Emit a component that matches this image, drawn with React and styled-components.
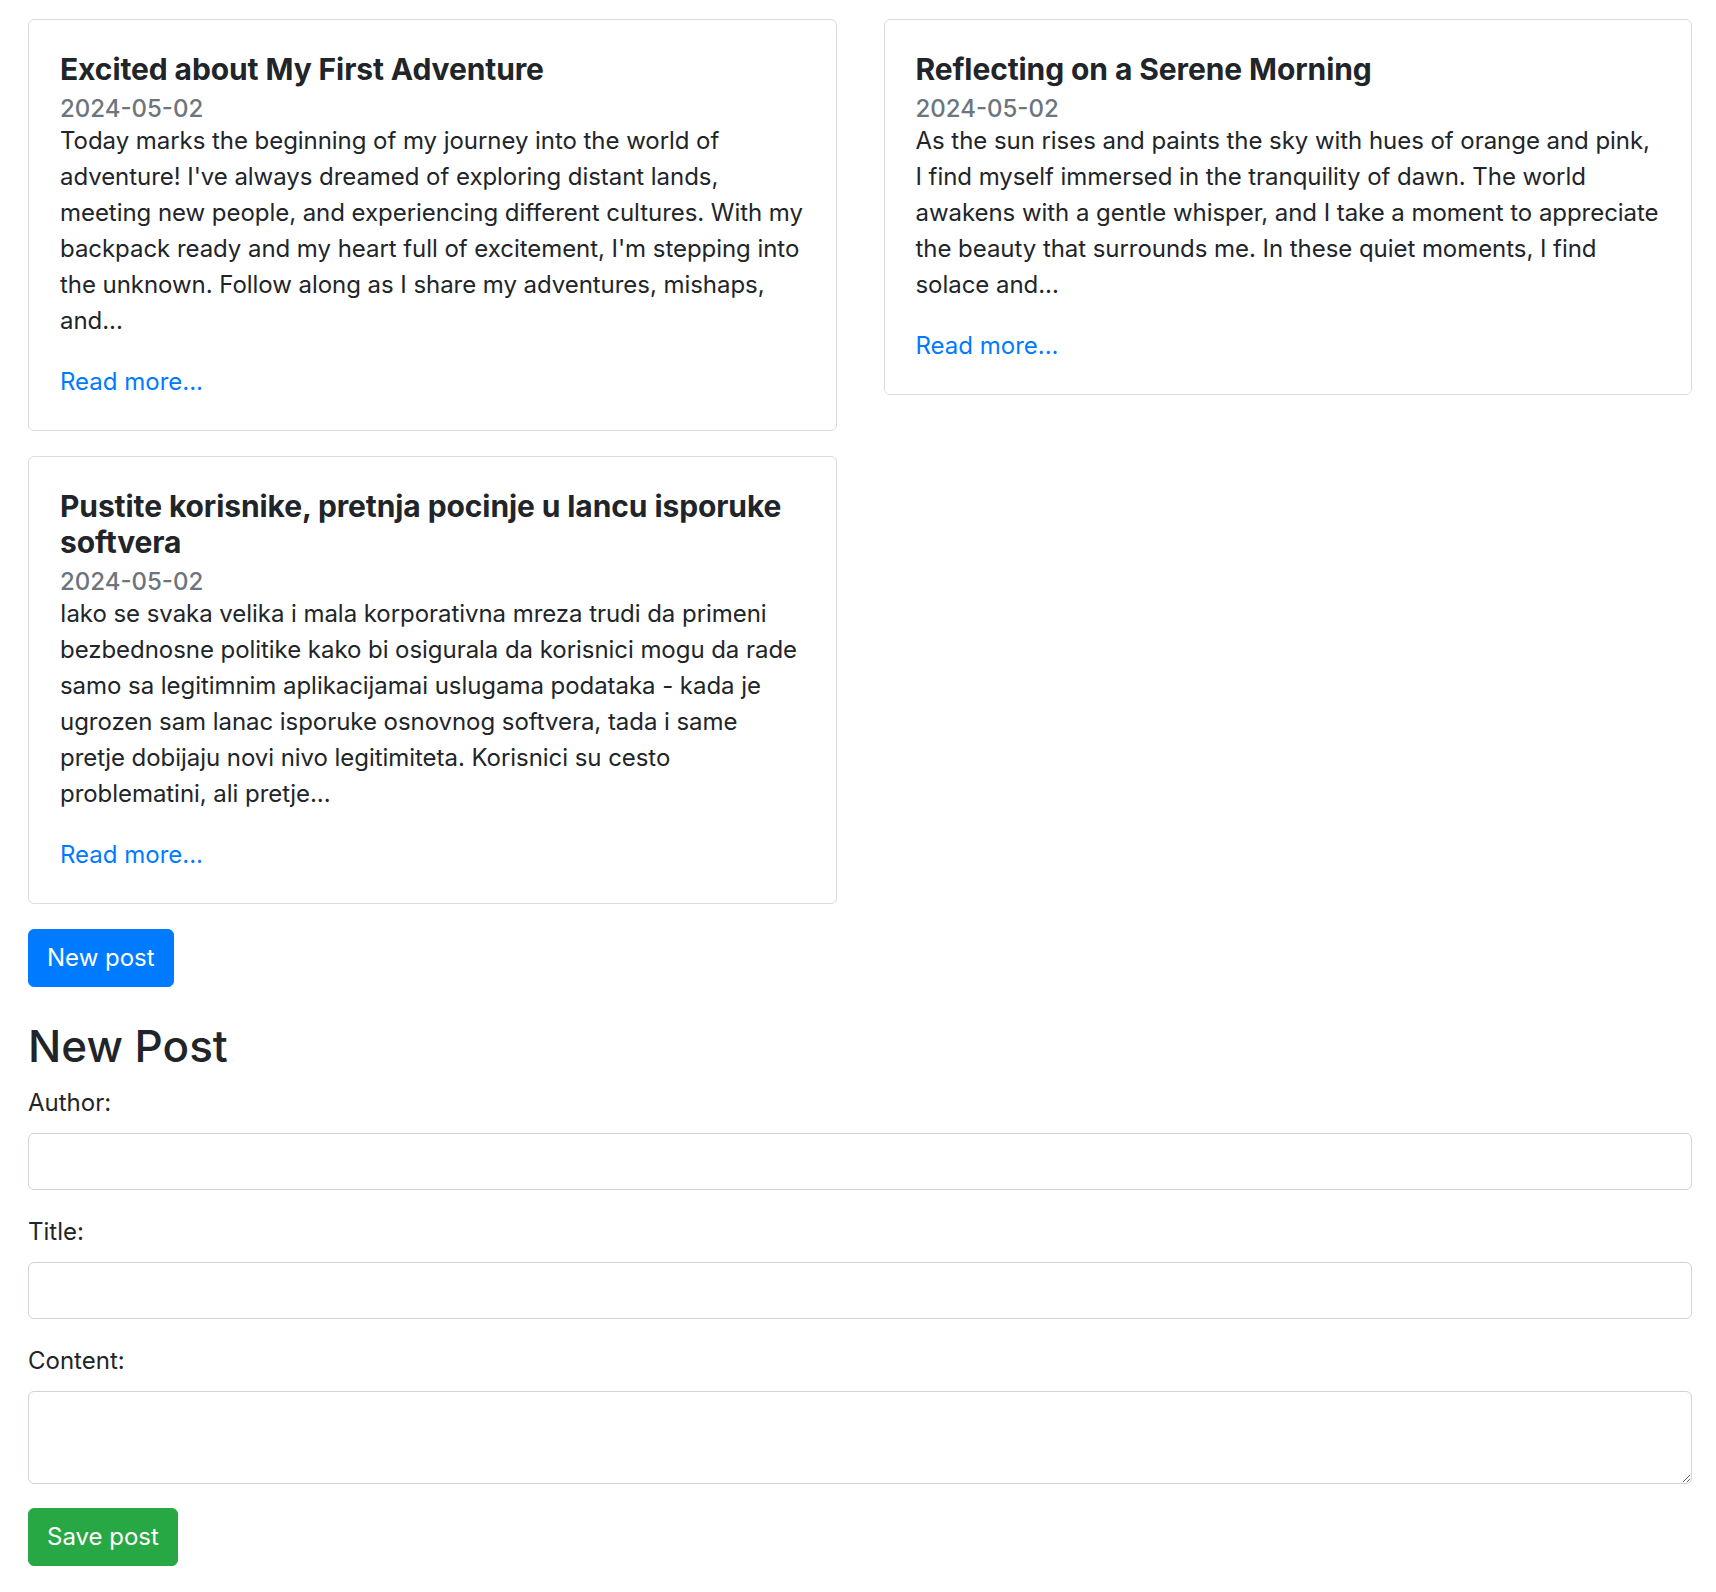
import React, { useState } from "react";
import styled, { createGlobalStyle } from "styled-components";

const GlobalStyle = createGlobalStyle`
  body {
    margin: 0;
    background: #fff;
    color: #212529;
    font-family: Inter, "Noto Sans", sans-serif;
  }
  * {
    box-sizing: border-box;
  }
`;

const Page = styled.div`
  padding: 19px 24px 20px 28px;
`;

const PostGrid = styled.div`
  display: grid;
  grid-template-columns: 1fr 1fr;
  column-gap: 47px;
  row-gap: 25px;
  align-items: start;
`;

const Card = styled.div`
  border: 1px solid #dcdcdc;
  border-radius: 6px;
  padding: 31px 31px 30px;
`;

const CardTitle = styled.h5`
  margin: 0 0 8px;
  font-size: 30px;
  font-weight: 700;
  line-height: 1.2;
  letter-spacing: -0.1px;
`;

const CardDate = styled.h6`
  margin: 0 0 -1px;
  font-size: 24px;
  font-weight: 500;
  line-height: 1.2;
  color: #6c757d;
`;

const CardText = styled.p`
  margin: 0 0 25px;
  font-size: 24px;
  line-height: 1.5;
  letter-spacing: -0.05px;
`;

const ReadMore = styled.a`
  font-size: 24px;
  line-height: 1.5;
  color: #007bff;
  text-decoration: none;
`;

const Button = styled.button`
  display: inline-block;
  padding: 10px 18px;
  border: 1px solid ${(p) => p.$color};
  border-radius: 6px;
  background: ${(p) => p.$color};
  color: #fff;
  font-family: inherit;
  font-size: 24px;
  line-height: 1.5;
  cursor: pointer;
`;

const NewPostBar = styled.div`
  margin-top: 25px;
`;

const FormHeading = styled.h2`
  margin: 33px 0 13px;
  font-size: 44px;
  font-weight: 500;
  line-height: 1.2;
`;

const FormGroup = styled.div`
  margin-bottom: 24px;
`;

const Label = styled.label`
  display: block;
  margin-bottom: 12px;
  font-size: 24px;
  line-height: 1.5;
`;

const Input = styled.input`
  display: block;
  width: 100%;
  height: 57px;
  padding: 9px 18px;
  border: 1px solid #ced4da;
  border-radius: 6px;
  font-family: inherit;
  font-size: 24px;
  color: #495057;
`;

const TextArea = styled.textarea`
  display: block;
  width: 100%;
  height: 93px;
  padding: 9px 18px;
  border: 1px solid #ced4da;
  border-radius: 6px;
  font-family: inherit;
  font-size: 24px;
  color: #495057;
  resize: vertical;
`;

const posts = [
  {
    id: 1,
    title: "Excited about My First Adventure",
    date: "2024-05-02",
    excerpt:
      "Today marks the beginning of my journey into the world of adventure! I've always dreamed of exploring distant lands, meeting new people, and experiencing different cultures. With my backpack ready and my heart full of excitement, I'm stepping into the unknown. Follow along as I share my adventures, mishaps, and...",
  },
  {
    id: 2,
    title: "Reflecting on a Serene Morning",
    date: "2024-05-02",
    excerpt:
      "As the sun rises and paints the sky with hues of orange and pink, I find myself immersed in the tranquility of dawn. The world awakens with a gentle whisper, and I take a moment to appreciate the beauty that surrounds me. In these quiet moments, I find solace and...",
  },
  {
    id: 3,
    title: "Pustite korisnike, pretnja pocinje u lancu isporuke softvera",
    date: "2024-05-02",
    excerpt:
      "Iako se svaka velika i mala korporativna mreza trudi da primeni bezbednosne politike kako bi osigurala da korisnici mogu da rade samo sa legitimnim aplikacijamai uslugama podataka - kada je ugrozen sam lanac isporuke osnovnog softvera, tada i same pretje dobijaju novi nivo legitimiteta. Korisnici su cesto problematini, ali pretje...",
  },
];

const App = () => {
  const [form, setForm] = useState({ author: "", title: "", content: "" });
  const update = (key) => (e) => setForm({ ...form, [key]: e.target.value });

  return (
    <Page>
      <GlobalStyle />
      <PostGrid>
        {posts.map((post) => (
          <Card key={post.id}>
            <CardTitle>{post.title}</CardTitle>
            <CardDate>{post.date}</CardDate>
            <CardText>{post.excerpt}</CardText>
            <ReadMore href="#">Read more...</ReadMore>
          </Card>
        ))}
      </PostGrid>

      <NewPostBar>
        <Button $color="#007bff">New post</Button>
      </NewPostBar>

      <FormHeading>New Post</FormHeading>
      <FormGroup>
        <Label>Author:</Label>
        <Input value={form.author} onChange={update("author")} />
      </FormGroup>
      <FormGroup>
        <Label>Title:</Label>
        <Input value={form.title} onChange={update("title")} />
      </FormGroup>
      <FormGroup>
        <Label>Content:</Label>
        <TextArea value={form.content} onChange={update("content")} />
      </FormGroup>
      <Button $color="#28a745">Save post</Button>
    </Page>
  );
};

export default App;
